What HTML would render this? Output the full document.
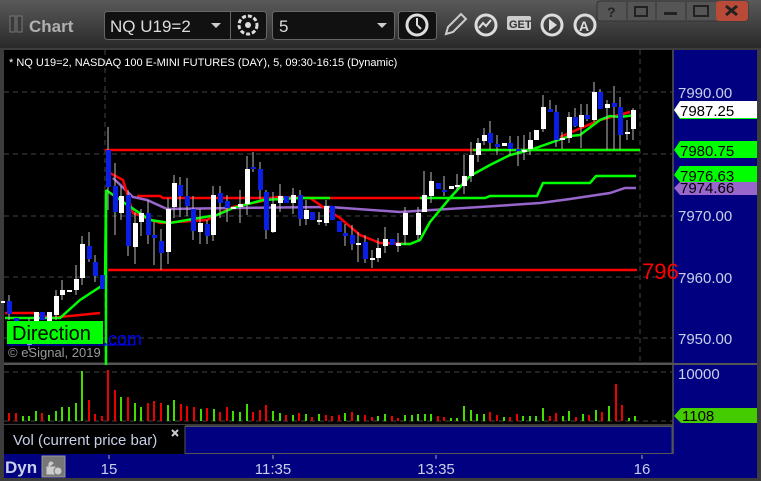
<!DOCTYPE html>
<html><head><meta charset="utf-8"><style>
body{margin:0;width:761px;height:481px;overflow:hidden;background:#3c3c3c;font-family:"Liberation Sans",sans-serif;}
#top{position:absolute;left:0;top:0;width:761px;height:48px;background:linear-gradient(#5a5a5a,#2a2a2a);}
.t{position:absolute;white-space:nowrap}
</style></head><body>
<div id="top"></div>
<svg width="761" height="481" style="position:absolute;left:0;top:0" font-family="Liberation Sans, sans-serif">
<!-- titlebar -->
<rect x="10" y="16" width="5" height="16" fill="#3a3a3a" stroke="#777"/><rect x="17" y="16" width="5" height="16" fill="#3a3a3a" stroke="#777"/>
<text x="29" y="32" font-size="17" font-weight="bold" fill="#b0b0b0">Chart</text>
<rect x="104.5" y="11.5" width="162" height="28" rx="3" fill="#111" stroke="#666"/>
<line x1="230.5" y1="12" x2="230.5" y2="39" stroke="#666"/>
<text x="110" y="32" font-size="17" fill="#ddd">NQ U19=2</text>
<path d="M211 23h10l-5 5z" fill="#ccc"/>
<circle cx="248" cy="25" r="9" fill="none" stroke="#ddd" stroke-width="3" stroke-dasharray="4 2"/><circle cx="248" cy="25" r="3" fill="#ddd"/>
<rect x="272.5" y="11.5" width="122" height="28" rx="3" fill="#111" stroke="#666"/>
<line x1="398.5" y1="12" x2="398.5" y2="39" stroke="#666"/>
<rect x="398.5" y="11.5" width="38" height="28" rx="3" fill="#111" stroke="#666"/>
<text x="279" y="32" font-size="17" fill="#ddd">5</text>
<path d="M377 23h10l-5 5z" fill="#ccc"/>
<circle cx="417" cy="25" r="10" fill="none" stroke="#ddd" stroke-width="3"/><path d="M417 18v7l4 4" stroke="#ddd" stroke-width="2" fill="none"/>
<path d="M446 34l2-7 13-13 5 5-13 13z" fill="none" stroke="#ccc" stroke-width="2"/>
<circle cx="486" cy="25" r="10" fill="none" stroke="#ddd" stroke-width="3"/><path d="M479 28l4-5 3 3 5-6" stroke="#ddd" stroke-width="2" fill="none"/>
<rect x="507" y="16" width="24" height="14" rx="2" fill="#ccc"/><text x="509" y="28" font-size="11" font-weight="bold" fill="#333">GET</text>
<circle cx="552" cy="25" r="10" fill="none" stroke="#ddd" stroke-width="3"/><path d="M549 19v12l8-6z" fill="#ddd"/>
<circle cx="585" cy="25" r="10" fill="none" stroke="#ddd" stroke-width="3"/><text x="579" y="31" font-size="14" font-weight="bold" fill="#ddd">A</text>
<rect x="597" y="1" width="151" height="20" rx="3" fill="#555" stroke="#333"/>
<rect x="716" y="1" width="32" height="20" rx="3" fill="#b94a38"/>
<g stroke="#333"><line x1="627" y1="2" x2="627" y2="20"/><line x1="656" y1="2" x2="656" y2="20"/><line x1="686" y1="2" x2="686" y2="20"/></g>
<text x="607" y="17" font-size="14" font-weight="bold" fill="#222">?</text>
<rect x="635" y="7" width="12" height="9" fill="none" stroke="#222" stroke-width="2"/>
<rect x="664" y="12" width="13" height="3" fill="#222"/>
<rect x="694" y="6" width="14" height="10" fill="none" stroke="#222" stroke-width="2"/>
<path d="M726 6l11 9M737 6l-11 9" stroke="#222" stroke-width="3"/>
<!-- chart area -->
<rect x="4" y="50" width="669" height="313" fill="#000"/>
<rect x="673" y="50" width="84" height="404" fill="#000080"/>
<line x1="4" y1="364" x2="673" y2="364" stroke="#555" stroke-width="3"/>
<line x1="673" y1="364" x2="757" y2="364" stroke="#555" stroke-width="2"/>
<rect x="4" y="365" width="669" height="59" fill="#000"/>
<line x1="673" y1="50" x2="673" y2="455" stroke="#555" stroke-width="1.5"/>
<rect x="4" y="425" width="181" height="29" fill="#000"/>
<rect x="185" y="426.5" width="487" height="27" fill="#000080" stroke="#555"/>
<rect x="4" y="454" width="753" height="24" fill="#000080"/>
<rect x="0" y="478" width="761" height="3" fill="#3c3c3c"/>
<!-- grid -->
<g stroke="#444" stroke-dasharray="5 4">
<line x1="4" y1="92" x2="673" y2="92"/><line x1="4" y1="154" x2="673" y2="154"/><line x1="4" y1="216" x2="673" y2="216"/><line x1="4" y1="277" x2="673" y2="277"/><line x1="4" y1="338" x2="673" y2="338"/>
<line x1="4" y1="372" x2="673" y2="372"/><line x1="4" y1="421" x2="673" y2="421"/>
<line x1="105" y1="50" x2="105" y2="363"/><line x1="640" y1="50" x2="640" y2="363"/>
</g>
<text x="9" y="66" font-size="11" fill="#fff">* NQ U19=2, NASDAQ 100 E-MINI FUTURES (DAY), 5, 09:30-16:15 (Dynamic)</text>
<!-- lines -->
<g fill="none" stroke-width="2.5">
<line x1="105" y1="150" x2="640" y2="150" stroke="#f00"/>
<line x1="473" y1="150" x2="640" y2="150" stroke="#0f0"/>
<line x1="108" y1="270" x2="637" y2="270" stroke="#f00"/>
<polyline stroke="#f00" points="137,196 160,196 163,198 420,198"/>
<polyline stroke="#0f0" points="420,198 485,198 490,196 537,196 543,183 590,183 596,176 636,176"/>
<polyline stroke="#9966cc" points="113,178 133,197 147,200 167,209 233,208 330,207 400,212 480,207 540,203 570,199 610,193 625,188 636,188"/>
<polyline stroke="#f00" points="5,313 35,313 50,318 100,313"/>
<polyline stroke="#f00" points="110,173 123,180 133,213 160,223 207,220 233,207 267,200 277,197 310,198 323,207 340,218 360,235 380,243 410,244"/>
<polyline stroke="#f00" points="560,137 600,120 630,112"/>
<polyline stroke="#0f0" points="5,318 60,318 80,300 100,287 105,285 106,190 106,365"/>
<polyline stroke="#0f0" points="106,190 123,202 150,220 170,223 187,220 217,215 233,208 263,200 300,198 330,198"/>
<polyline stroke="#0f0" points="400,244 410,244 420,240 430,222 450,198 470,176 490,165 510,155 530,150 550,143 570,136 580,135 600,120 610,116 620,117 636,115"/>
</g>
<!-- candles -->
<g stroke="#bbb" stroke-width="1">
<line x1="9" y1="295" x2="9" y2="320"/><line x1="29" y1="318" x2="29" y2="350"/><line x1="56" y1="290" x2="56" y2="320"/><line x1="62" y1="280" x2="62" y2="300"/><line x1="76" y1="265" x2="76" y2="295"/><line x1="82" y1="236" x2="82" y2="285"/><line x1="89" y1="232" x2="89" y2="262"/><line x1="95" y1="255" x2="95" y2="282"/>
<line x1="108" y1="127" x2="108" y2="210"/><line x1="115" y1="163" x2="115" y2="235"/><line x1="121" y1="186" x2="121" y2="220"/><line x1="128" y1="190" x2="128" y2="256"/><line x1="135" y1="212" x2="135" y2="264"/><line x1="141" y1="209" x2="141" y2="236"/><line x1="148" y1="200" x2="148" y2="244"/><line x1="154" y1="222" x2="154" y2="265"/><line x1="161" y1="229" x2="161" y2="270"/><line x1="168" y1="198" x2="168" y2="264"/><line x1="174" y1="175" x2="174" y2="218"/><line x1="180" y1="177" x2="180" y2="217"/><line x1="187" y1="178" x2="187" y2="216"/><line x1="193" y1="196" x2="193" y2="240"/><line x1="200" y1="209" x2="200" y2="244"/><line x1="207" y1="220" x2="207" y2="244"/><line x1="213" y1="186" x2="213" y2="241"/><line x1="220" y1="186" x2="220" y2="218"/><line x1="227" y1="195" x2="227" y2="222"/><line x1="240" y1="190" x2="240" y2="223"/><line x1="247" y1="156" x2="247" y2="215"/><line x1="253" y1="152" x2="253" y2="172"/><line x1="260" y1="162" x2="260" y2="199"/><line x1="266" y1="190" x2="266" y2="239"/><line x1="273" y1="192" x2="273" y2="233"/><line x1="280" y1="184" x2="280" y2="212"/><line x1="293" y1="188" x2="293" y2="214"/><line x1="300" y1="190" x2="300" y2="226"/><line x1="306" y1="200" x2="306" y2="225"/><line x1="319" y1="212" x2="319" y2="225"/>
<line x1="326" y1="200" x2="326" y2="226"/><line x1="345" y1="224" x2="345" y2="246"/><line x1="352" y1="225" x2="352" y2="250"/><line x1="358" y1="232" x2="358" y2="262"/><line x1="365" y1="235" x2="365" y2="263"/><line x1="372" y1="250" x2="372" y2="268"/><line x1="378" y1="238" x2="378" y2="262"/><line x1="385" y1="227" x2="385" y2="253"/><line x1="398" y1="233" x2="398" y2="252"/><line x1="405" y1="207" x2="405" y2="245"/><line x1="418" y1="207" x2="418" y2="240"/><line x1="424" y1="171" x2="424" y2="212"/><line x1="431" y1="172" x2="431" y2="203"/><line x1="444" y1="176" x2="444" y2="196"/><line x1="457" y1="174" x2="457" y2="190"/><line x1="464" y1="155" x2="464" y2="194"/><line x1="471" y1="142" x2="471" y2="182"/><line x1="478" y1="138" x2="478" y2="162"/><line x1="484" y1="128" x2="484" y2="145"/><line x1="490" y1="121" x2="490" y2="150"/><line x1="497" y1="135" x2="497" y2="155"/><line x1="510" y1="136" x2="510" y2="155"/><line x1="518" y1="136" x2="518" y2="166"/><line x1="524" y1="135" x2="524" y2="160"/><line x1="530" y1="132" x2="530" y2="155"/><line x1="543" y1="95" x2="543" y2="132"/><line x1="550" y1="100" x2="550" y2="112"/><line x1="556" y1="105" x2="556" y2="147"/><line x1="562" y1="132" x2="562" y2="149"/><line x1="569" y1="112" x2="569" y2="143"/><line x1="575" y1="108" x2="575" y2="127"/><line x1="581" y1="104" x2="581" y2="148"/><line x1="587" y1="104" x2="587" y2="121"/><line x1="594" y1="82" x2="594" y2="122"/><line x1="600" y1="89" x2="600" y2="109"/><line x1="607" y1="100" x2="607" y2="150"/><line x1="614" y1="86" x2="614" y2="150"/><line x1="620" y1="97" x2="620" y2="150"/><line x1="627" y1="120" x2="627" y2="140"/><line x1="633" y1="108" x2="633" y2="140"/>
</g>
<g fill="#fff">
<rect x="1" y="301" width="4" height="2"/><rect x="27" y="325" width="5" height="20"/><rect x="34" y="312" width="5" height="11"/><rect x="47" y="312" width="5" height="9"/><rect x="54" y="296" width="5" height="19"/><rect x="60" y="290" width="5" height="5"/><rect x="67" y="290" width="5" height="2"/><rect x="74" y="279" width="5" height="11"/><rect x="80" y="244" width="5" height="34"/>
<rect x="119" y="196" width="5" height="17"/><rect x="133" y="223" width="5" height="24"/><rect x="139" y="213" width="5" height="9"/><rect x="166" y="209" width="5" height="43"/><rect x="172" y="183" width="5" height="24"/><rect x="198" y="223" width="5" height="9"/><rect x="211" y="195" width="5" height="40"/><rect x="231" y="207" width="5" height="2"/><rect x="238" y="204" width="5" height="3"/><rect x="245" y="169" width="5" height="35"/><rect x="271" y="204" width="5" height="28"/><rect x="278" y="196" width="5" height="7"/><rect x="291" y="195" width="5" height="8"/><rect x="304" y="210" width="5" height="9"/><rect x="317" y="220" width="5" height="2"/><rect x="324" y="206" width="5" height="17"/>
<rect x="356" y="243" width="5" height="2"/><rect x="370" y="258" width="5" height="2"/><rect x="376" y="248" width="5" height="10"/><rect x="383" y="239" width="5" height="7"/><rect x="396" y="243" width="5" height="3"/><rect x="403" y="213" width="5" height="22"/><rect x="416" y="213" width="5" height="22"/><rect x="422" y="195" width="5" height="17"/><rect x="429" y="181" width="5" height="15"/><rect x="449" y="186" width="5" height="3"/><rect x="455" y="185" width="5" height="2"/><rect x="462" y="176" width="5" height="10"/><rect x="469" y="155" width="5" height="21"/><rect x="476" y="143" width="5" height="12"/><rect x="482" y="135" width="5" height="6"/><rect x="502" y="143" width="5" height="3"/><rect x="522" y="150" width="5" height="2"/><rect x="528" y="140" width="5" height="9"/><rect x="534" y="130" width="5" height="10"/><rect x="541" y="107" width="5" height="22"/><rect x="560" y="138" width="5" height="2"/><rect x="567" y="117" width="5" height="21"/><rect x="579" y="115" width="5" height="12"/><rect x="592" y="92" width="5" height="28"/><rect x="605" y="104" width="5" height="4"/><rect x="625" y="132" width="5" height="2"/><rect x="631" y="110" width="5" height="19"/>
</g>
<g fill="#0a1fe6">
<rect x="7" y="301" width="5" height="13"/><rect x="14" y="318" width="5" height="17"/><rect x="21" y="330" width="5" height="10"/><rect x="40" y="312" width="5" height="8"/><rect x="87" y="246" width="5" height="13"/><rect x="93" y="262" width="5" height="14"/><rect x="100" y="275" width="5" height="14"/>
<rect x="106" y="150" width="5" height="37"/><rect x="113" y="186" width="5" height="26"/><rect x="126" y="195" width="5" height="51"/><rect x="146" y="213" width="5" height="22"/><rect x="152" y="235" width="5" height="3"/><rect x="159" y="241" width="5" height="12"/><rect x="178" y="185" width="5" height="11"/><rect x="185" y="196" width="5" height="10"/><rect x="191" y="209" width="5" height="22"/><rect x="205" y="224" width="5" height="12"/><rect x="218" y="193" width="5" height="10"/><rect x="225" y="201" width="5" height="7"/><rect x="251" y="167" width="5" height="2"/><rect x="258" y="169" width="5" height="21"/><rect x="264" y="192" width="5" height="38"/><rect x="284" y="196" width="5" height="7"/><rect x="298" y="195" width="5" height="24"/><rect x="310" y="212" width="5" height="8"/>
<rect x="330" y="206" width="5" height="14"/><rect x="337" y="221" width="5" height="11"/><rect x="343" y="233" width="5" height="3"/><rect x="350" y="235" width="5" height="9"/><rect x="363" y="242" width="5" height="17"/><rect x="390" y="239" width="5" height="6"/><rect x="436" y="183" width="5" height="6"/><rect x="442" y="190" width="5" height="2"/><rect x="488" y="133" width="5" height="10"/><rect x="495" y="144" width="5" height="3"/><rect x="508" y="143" width="5" height="6"/><rect x="516" y="149" width="5" height="2"/><rect x="548" y="109" width="5" height="3"/><rect x="554" y="112" width="5" height="28"/><rect x="573" y="117" width="5" height="9"/><rect x="585" y="115" width="5" height="4"/><rect x="598" y="92" width="5" height="17"/><rect x="612" y="103" width="5" height="4"/><rect x="618" y="107" width="5" height="28"/>
</g>
<text x="642" y="279" font-size="22" fill="#f00">796</text>
<!-- branding -->
<rect x="7" y="321" width="96" height="23" fill="#00ff00"/>
<text x="12" y="340" font-size="20" fill="#000">Direction</text>
<text x="103" y="345" font-size="18" fill="#00f">.com</text>
<line x1="7" y1="345" x2="135" y2="345" stroke="#00f"/>
<text x="8" y="357" font-size="13" fill="#999">© eSignal, 2019</text>
<!-- volume -->
<g stroke-width="2">
<path stroke="#e00" d="M9 421V413M16 421V413M42 421V413M89 421V400M95 421V414M102 421V416M108 421V370M115 421V390M128 421V397M148 421V403M154 421V401M161 421V403M181 421V404M187 421V406M194 421V407M207 421V408M220 421V412M227 421V407M253 421V412M260 421V410M266 421V405M286 421V415M299 421V413M312 421V417M326 421V415M332 421V416M339 421V415M352 421V412M365 421V415M372 421V417M392 421V416M398 421V418M438 421V416M444 421V417M490 421V412M497 421V415M510 421V417M517 421V414M550 421V416M556 421V413M576 421V417M589 421V415M602 421V412M616 421V384M622 421V405"/>
<path stroke="#44dd00" d="M23 421V416M29 421V416M36 421V411M49 421V415M56 421V411M62 421V407M69 421V407M76 421V403M82 421V371M121 421V397M135 421V403M141 421V407M168 421V405M174 421V400M201 421V409M214 421V409M233 421V411M240 421V412M247 421V404M273 421V411M280 421V413M293 421V415M306 421V414M319 421V414M345 421V413M358 421V415M378 421V416M385 421V414M405 421V415M412 421V415M418 421V414M425 421V414M431 421V414M451 421V418M457 421V418M464 421V406M471 421V410M477 421V414M484 421V414M504 421V417M523 421V416M530 421V416M536 421V416M543 421V408M563 421V416M569 421V411M583 421V414M596 421V410M609 421V406M629 421V418M635 421V416"/>
</g>
<!-- axis labels -->
<g font-size="15" fill="#c8d0e8">
<text x="678" y="98">7990.00</text><text x="678" y="221">7970.00</text><text x="678" y="283">7960.00</text><text x="678" y="344">7950.00</text>
<text x="678" y="379">10000</text>
</g>
<path d="M674 110l6-8h77v17h-77z" fill="#00ff00"/>
<path d="M674 110l6-9h77v17h-77z" fill="#fff"/>
<text x="680" y="116" font-size="15" fill="#000">7987.25</text>
<path d="M674 150l6-9h77v17h-77z" fill="#00ff00"/>
<text x="680" y="156" font-size="15" fill="#000">7980.75</text>
<path d="M674 188l6-6h77v13h-77z" fill="#9966cc"/>
<path d="M674 175l6-9h77v16h-77z" fill="#00ff00"/>
<text x="680" y="181" font-size="15" fill="#000">7976.63</text>
<text x="680" y="193" font-size="15" fill="#000">7974.66</text>
<path d="M674 416l7-8h76v15h-76z" fill="#44cc00"/>
<text x="682" y="421" font-size="15" fill="#000">1108</text>
<!-- legend -->
<text x="13" y="445" font-size="15" fill="#c8d0e8">Vol (current price bar)</text>
<path d="M172 430l6 6M178 430l-6 6" stroke="#ccc" stroke-width="2"/>
<text x="5" y="473" font-size="17" font-weight="bold" fill="#c8d0e8">Dyn</text>
<rect x="42" y="456" width="23" height="21" fill="#777" stroke="#999"/>
<path d="M47 474v-7h8v7zM49 467v-3a2 2 0 0 1 4 0" fill="#ccc" stroke="#ccc"/><circle cx="58" cy="471" r="4" fill="#ccc" stroke="#777"/>
<g stroke="#aaa"><line x1="109" y1="455" x2="109" y2="459"/><line x1="273" y1="455" x2="273" y2="459"/><line x1="436" y1="455" x2="436" y2="459"/><line x1="642" y1="455" x2="642" y2="459"/></g>
<g font-size="15" fill="#c8d0e8" text-anchor="middle">
<text x="109" y="474">15</text><text x="273" y="474">11:35</text><text x="436" y="474">13:35</text><text x="642" y="474">16</text>
</g>
</svg>
</body></html>
